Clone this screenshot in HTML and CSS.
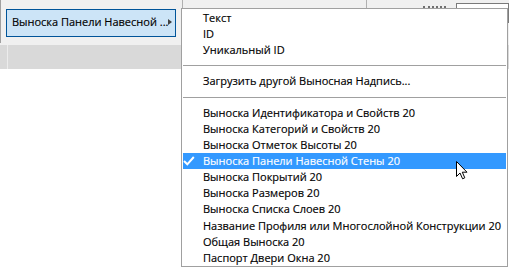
FILE: index.html
```html
<!DOCTYPE html>
<html lang="ru">
<head>
<meta charset="utf-8">
<title>Menu</title>
<link rel="stylesheet" href="styles.css">
</head>
<body>
<div class="app">
  <div class="toolbar">
    <div class="tb-edge"></div>
    <div class="combo">
      <span class="combo-text">Выноска Панели Навесной ...</span>
      <span class="combo-arrow"></span>
    </div>
    <div class="tb-sep tb-sep1"></div>
    <div class="tb-sep tb-sep2"></div>
    <div class="tb-ticks"></div>
    <div class="tb-input"></div>
  </div>
  <div class="band">
    <div class="band-cell"></div>
  </div>
  <div class="content"></div>
</div>

<div class="menu">
  <div class="item">Текст</div>
  <div class="item">ID</div>
  <div class="item">Уникальный ID</div>
  <div class="sep"></div>
  <div class="item">Загрузить другой Выносная Надпись...</div>
  <div class="sep"></div>
  <div class="item">Выноска Идентификатора и Свойств 20</div>
  <div class="item">Выноска Категорий и Свойств 20</div>
  <div class="item">Выноска Отметок Высоты 20</div>
  <div class="item checked">
    <svg class="check" width="12" height="10" viewBox="0 0 12 10"><path d="M1 5 L4.3 8.3 L10.8 1" fill="none" stroke="#fff" stroke-width="2"/></svg>
    Выноска Панели Навесной Стены 20
  </div>
  <div class="item">Выноска Покрытий 20</div>
  <div class="item">Выноска Размеров 20</div>
  <div class="item">Выноска Списка Слоев 20</div>
  <div class="item">Название Профиля или Многослойной Конструкции 20</div>
  <div class="item">Общая Выноска 20</div>
  <div class="item">Паспорт Двери Окна 20</div>
</div>

<svg class="cursor" width="14" height="21" viewBox="0 0 14 21">
  <path d="M1.5 1.5 L1.5 16.5 L5 13 L7.6 18.8 L9.8 17.8 L7.3 12.2 L12 12.2 Z" fill="#fff" stroke="#000" stroke-width="1" stroke-linejoin="miter"/>
</svg>
</body>
</html>
```
FILE: styles.css
```css
html, body {
  margin: 0;
  padding: 0;
}
body {
  width: 509px;
  height: 268px;
  overflow: hidden;
  position: relative;
  background: #ffffff;
  font-family: "Open Sans", "Noto Sans", sans-serif;
  font-size: 11px;
  color: #000;
}
.app {
  display: flex;
  flex-direction: column;
  height: 100%;
}
.toolbar {
  height: 45px;
  background: #f0f0f0;
  display: flex;
  align-items: flex-start;
}
.tb-edge {
  width: 1px;
  height: 43px;
  background: #a0a0a0;
}
.combo {
  margin-left: 5px;
  margin-top: 9px;
  width: 174px;
  height: 28px;
  box-sizing: border-box;
  border: 1px solid #005499;
  background: #cce4f7;
  display: flex;
  align-items: center;
  padding: 0 3px 0 5px;
}
.combo-text {
  white-space: nowrap;
  line-height: 16px;
  position: relative;
  top: -1px;
  -webkit-text-stroke: 0.15px #000;
}
.combo-arrow {
  margin-left: auto;
  width: 0;
  height: 0;
  border-top: 3.5px solid transparent;
  border-bottom: 3.5px solid transparent;
  border-left: 4px solid #404040;
  position: relative;
  top: -1px;
}
.tb-sep {
  width: 1px;
  height: 20px;
  background: #b0b0b0;
}
.tb-sep1 { margin-left: 6px; }
.tb-sep2 { margin-left: 183px; }
.tb-ticks {
  margin-left: 56px;
  margin-top: 6px;
  width: 26px;
  border-top: 2px dotted #707070;
}
.tb-input {
  margin-left: 10px;
  margin-top: 3px;
  width: 60px;
  height: 20px;
  box-sizing: border-box;
  border: 1px solid #7a7a7a;
  background: #fff;
}
.band {
  height: 24px;
  background: #d9d9d9;
  display: flex;
}
.band-cell {
  width: 7px;
  border-right: 1px solid #ececec;
}
.content {
  flex: 1;
  background: #fff;
}

.menu {
  position: absolute;
  left: 181px;
  top: 8px;
  width: 327px;
  height: 259px;
  box-sizing: border-box;
  border: 1px solid #a0a0a0;
  background: #fff;
  padding: 1px 1px 0 1px;
  display: flex;
  flex-direction: column;
}
.item {
  height: 16.15px;
  line-height: 16.15px;
  padding-left: 20px;
  white-space: nowrap;
  position: relative;
  flex: none;
  -webkit-text-stroke: 0.15px currentColor;
}
.item.checked {
  background: #3399ff;
  color: #fff;
}
.check {
  position: absolute;
  left: 0;
  top: 3.5px;
}
.sep {
  flex: none;
  height: 1px;
  background: #a0a0a0;
  margin: 7px 0 7px 0;
}
.cursor {
  position: absolute;
  left: 455px;
  top: 160px;
}
```
